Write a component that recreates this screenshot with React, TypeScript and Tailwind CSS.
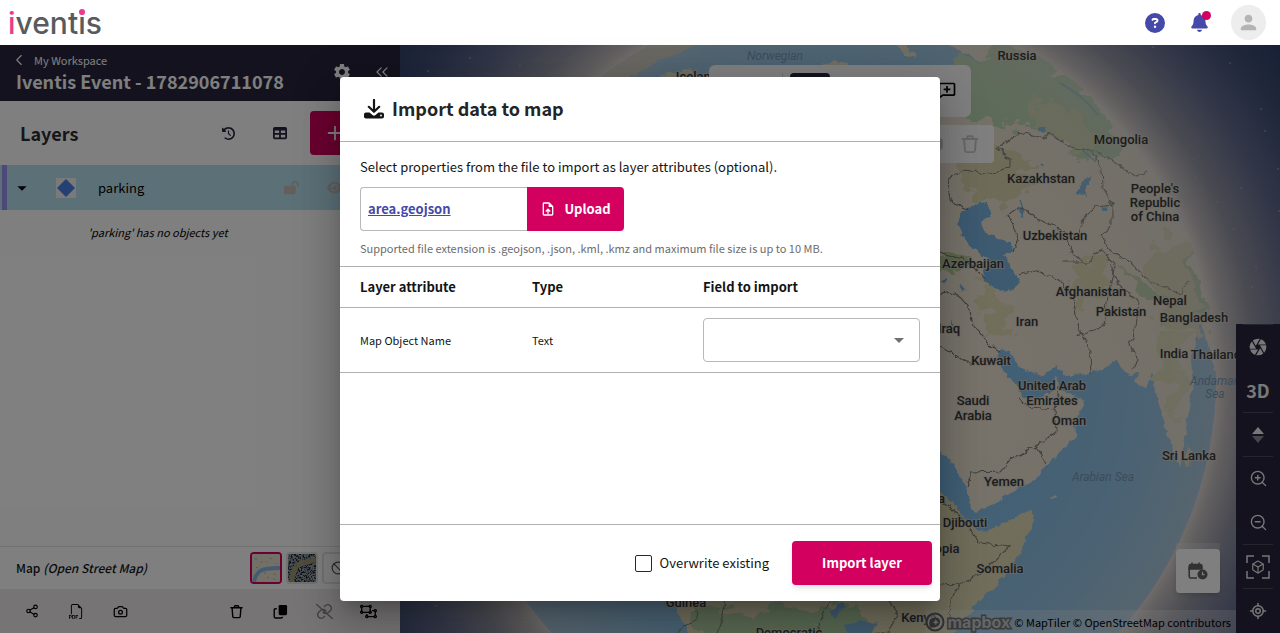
import type { ReactNode } from 'react'
import {
  Ban,
  Box,
  Camera,
  ChevronLeft,
  ChevronsLeft,
  LocateFixed,
  Plus,
  Share2,
  ZoomIn,
  ZoomOut,
} from 'lucide-react'
import { BiCommentAdd } from 'react-icons/bi'
import { BsFiletypePdf } from 'react-icons/bs'
import {
  FaBell,
  FaCircleQuestion,
  FaClockRotateLeft,
  FaEye,
  FaLockOpen,
  FaRegObjectUngroup,
  FaTable,
} from 'react-icons/fa6'
import { MdArrowDropDown, MdCamera, MdOutlineUploadFile, MdPerson, MdSettings } from 'react-icons/md'

const MAP_LABELS = [
  { x: 1017, y: 60, text: 'Russia' },
  { x: 697, y: 81, text: 'Iceland' },
  { x: 1121, y: 144, text: 'Mongolia' },
  { x: 1041, y: 183, text: 'Kazakhstan' },
  { x: 1155, y: 193, text: "People's" },
  { x: 1155, y: 207, text: 'Republic' },
  { x: 1155, y: 221, text: 'of China' },
  { x: 1055, y: 240, text: 'Uzbekistan' },
  { x: 973, y: 268, text: 'Azerbaijan' },
  { x: 1091, y: 296, text: 'Afghanistan' },
  { x: 1170, y: 305, text: 'Nepal' },
  { x: 1121, y: 316, text: 'Pakistan' },
  { x: 1194, y: 322, text: 'Bangladesh' },
  { x: 1027, y: 326, text: 'Iran' },
  { x: 949, y: 333, text: 'Iraq' },
  { x: 1174, y: 358, text: 'India' },
  { x: 1216, y: 359, text: 'Thailand' },
  { x: 991, y: 365, text: 'Kuwait' },
  { x: 1052, y: 390, text: 'United Arab' },
  { x: 1052, y: 405, text: 'Emirates' },
  { x: 973, y: 405, text: 'Saudi' },
  { x: 973, y: 420, text: 'Arabia' },
  { x: 1069, y: 425, text: 'Oman' },
  { x: 1189, y: 460, text: 'Sri Lanka' },
  { x: 1004, y: 486, text: 'Yemen' },
  { x: 926, y: 503, text: 'Eritrea' },
  { x: 965, y: 527, text: 'Djibouti' },
  { x: 936, y: 553, text: 'Ethiopia' },
  { x: 1000, y: 573, text: 'Somalia' },
  { x: 686, y: 607, text: 'Guinea' },
  { x: 919, y: 622, text: 'Kenya' },
  { x: 789, y: 637, text: 'Democratic' },
]

const SEA_LABELS = [
  { x: 775, y: 60, text: 'Norwegian' },
  { x: 1103, y: 481, text: 'Arabian Sea' },
  { x: 1215, y: 385, text: 'Andaman' },
  { x: 1215, y: 398, text: 'Sea' },
]

const STARS = [
  [1094, 57], [1153, 47], [1230, 63], [1261, 109], [1265, 131], [1119, 92], [1194, 159],
  [1196, 177], [1278, 169], [1241, 188], [1217, 202], [1279, 211], [1234, 229], [1256, 267],
  [1252, 287], [1228, 412], [436, 606], [470, 58], [520, 66], [428, 71],
]

function Globe() {
  return (
    <svg viewBox="400 45 880 588" preserveAspectRatio="xMidYMid slice" className="absolute inset-0 h-full w-full">
      <defs>
        <radialGradient id="sky" gradientUnits="userSpaceOnUse" cx="835" cy="378" r="560">
          <stop offset="0.67" stopColor="#ece4de" />
          <stop offset="0.7" stopColor="#c4bfc0" />
          <stop offset="0.75" stopColor="#9496a4" />
          <stop offset="0.83" stopColor="#666e90" />
          <stop offset="0.92" stopColor="#414f78" />
          <stop offset="1" stopColor="#2c4068" />
        </radialGradient>
        <radialGradient id="haze" gradientUnits="userSpaceOnUse" cx="835" cy="378" r="382">
          <stop offset="0.4" stopColor="#e0d8d0" stopOpacity="0" />
          <stop offset="0.8" stopColor="#e0d8d0" stopOpacity="0.22" />
          <stop offset="1" stopColor="#d8d4d0" stopOpacity="0.5" />
        </radialGradient>
        <clipPath id="disc">
          <circle cx="835" cy="378" r="381" />
        </clipPath>
        <filter id="coast" x="0" y="0" width="1" height="1">
          <feTurbulence type="fractalNoise" baseFrequency="0.12" numOctaves="3" seed="4" />
          <feDisplacementMap in="SourceGraphic" scale="7" xChannelSelector="R" yChannelSelector="G" />
        </filter>
        <filter id="patches" x="0" y="0" width="1" height="1">
          <feTurbulence type="fractalNoise" baseFrequency="0.035 0.05" numOctaves="4" seed="9" />
          <feDisplacementMap in="SourceGraphic" scale="46" xChannelSelector="R" yChannelSelector="G" />
        </filter>
      </defs>

      <rect x="400" y="45" width="880" height="588" fill="url(#sky)" />
      {STARS.map(([x, y]) => (
        <circle key={`${x}-${y}`} cx={x} cy={y} r="0.8" fill="#a8b0c4" />
      ))}

      <g clipPath="url(#disc)">
        <rect x="440" y="0" width="790" height="640" fill="#80bfec" />
        <g filter="url(#coast)">
          {/* Greenland and the arctic islands */}
          <path d="M600 100L620 82 660 62 700 50 732 40 650 20 560 80Z" fill="#c8c8b8" />
          <path d="M640 76Q670 54 720 42" stroke="#82c4f2" strokeWidth="5" fill="none" />
          <path d="M660 76L690 68 700 82 670 90Z M895 40L905 56 916 58 904 44Z M820 66L835 62 848 64 846 70 822 70Z" fill="#e4e0c0" />
          {/* Eurasia, India and Arabia */}
          <path
            d="M940 40L962 52 985 66 960 72 860 80 860 400 900 420 935 446 950 460 962 480 967 490 970 510 975 513 985 508 1000 500 1020 487 1038 478 1041 470 1050 463 1060 453 1068 445 1076 435 1075 422 1084 405 1082 398 1070 394 1060 390 1057 376 1050 393 1036 399 1022 398 1019 390 1005 372 998 358 1000 350 1010 352 1017 365 1027 371 1042 376 1050 370 1057 366 1063 375 1090 374 1105 368 1115 361 1122 371 1131 376 1139 372 1135 382 1146 389 1151 373 1156 388 1160 405 1165 428 1172 447 1179 466 1183 453 1186 430 1190 400 1193 385 1191 360 1200 322 1208 344 1214 370 1240 380 1240 30 960 30Z"
            fill="#eee6d4"
          />
          <path d="M1188 445L1192 455 1191 466 1187 469 1185 458Z" fill="#dfe0b8" />
          {/* Africa */}
          <path
            d="M660 570L674 601 695 645 945 645 962 622 975 606 990 591 1005 576 1017 556 1026 540 1033 523 1033 509 1010 520 990 530 978 531 968 523 956 507 940 492 900 470 700 500Z"
            fill="#e2dcb2"
          />
        </g>

        <g filter="url(#patches)">
          <path d="M985 45L1030 55 1090 95 1125 150 1095 165 1060 140 1020 120 985 128 950 110 950 70Z" fill="#b2d6ac" />
          <path d="M1035 95L1075 110 1100 150 1070 145 1040 130Z" fill="#cfd8ac" />
          <path d="M955 150L1010 145 1040 170 1010 205 960 195Z" fill="#dcd8ac" />
          <path d="M1150 240L1180 240 1205 300 1195 340 1150 310Z" fill="#dcdab0" />
          <path d="M1120 265L1150 290 1175 300 1165 308 1130 292Z" fill="#b8d4a4" />
          <path d="M1185 255L1205 290 1212 330 1195 300Z" fill="#a9cda0" />
          <path d="M1155 325L1185 330 1185 400 1175 425 1162 380Z" fill="#e0dfb4" />
          <path d="M1080 255L1110 260 1105 300 1075 295Z" fill="#e0dcb0" />
          <path d="M940 242L975 252 960 270 935 268Z" fill="#b8cc98" />
          <path d="M975 280L1000 300 1010 340 985 320Z" fill="#e2dcb4" />
          <path d="M700 610L860 605 880 645 690 645Z" fill="#a8d09c" />
        </g>

        {/* Inland water */}
        <g filter="url(#coast)" fill="#72b2e2">
          <path d="M974 205L987 203 992 215 981 222 985 233 1000 238 1011 244 1013 252 1003 252 1010 264 1019 284 1008 291 992 288 985 280 984 270 991 262 976 250 964 238 957 225 961 213Z" />
          <path d="M1077 192L1082 182 1092 177 1084 190 1088 196 1080 194Z" />
          <path d="M1018 209L1022 208 1023 218 1019 215Z M1040 127L1046 127 1045 132 1040 131Z M1041 162L1044 164 1042 167Z" />
          <path d="M1102 207L1108 206 1106 211 1101 211Z M940 281L948 279 945 284Z M960 284L966 290 963 292Z M951 318L955 325 952 324Z" />
          <path d="M830 612L842 602 846 606 834 618Z M846 625L860 620 876 623 872 633 846 637Z" />
        </g>
        <path
          d="M1060 83Q1085 97 1098 115M1082 150L1096 162M1020 200L1024 212"
          fill="none"
          stroke="#78b4dc"
          strokeWidth="1.5"
        />

        {/* Borders */}
        <g filter="url(#coast)" fill="none" stroke="#77736c" strokeWidth="1.1">
          <path d="M968 210L950 200 947 180 965 170 985 174 1010 168 1010 160 998 148 1020 132 1042 139 1048 132 1072 148 1090 150 1102 170 1103 188 1112 204 1098 206 1083 218 1080 236" />
          <path d="M1092 150L1110 158 1125 170 1138 177 1145 172" />
          <path d="M1013 253L1018 238 1008 215 1020 208 1045 222 1065 232 1070 250 1082 262" />
          <path d="M1018 275L1034 270 1060 280 1073 298 1078 325 1090 352 1091 374" />
          <path d="M1062 262L1090 262 1100 250 1115 264 1108 295 1104 326 1078 336" />
          <path d="M1112 204L1112 225 1100 236 1110 250 1130 262 1148 280 1180 294 1190 282" />
          <path d="M1110 265L1118 285 1137 300 1135 330 1130 345 1138 360 1132 370" />
          <path d="M940 294L955 292 970 310 973 325 990 345 1000 352M940 346L970 364 985 362 998 360" />
          <path d="M940 252L965 260 985 278M1018 398L1030 408 1055 410 1058 385M1055 410L1056 432 1036 446 1010 460 1000 471 972 472 967 486M1036 446L1046 464" />
          <path d="M940 500L960 515 972 532 980 543 1010 546 985 570 960 584 951 600 950 625M940 585L960 584" />
          <path d="M695 605L698 620 680 628 676 640M725 600L722 620 716 636M830 600L820 620 818 640M890 600L898 612 888 632M888 632L850 636" />
        </g>
        <path d="M1050 498L1056 495 1057 497 1051 499Z" fill="#e8e4d8" />
        <circle cx="835" cy="378" r="382" fill="url(#haze)" />
      </g>

      <g textAnchor="middle" fontFamily="Roboto, sans-serif" fontSize="13">
        {SEA_LABELS.map((label) => (
          <text key={label.text} x={label.x} y={label.y} fontStyle="italic" fontSize="12" fill="#7898b8">
            {label.text}
          </text>
        ))}
        {MAP_LABELS.map((label) => (
          <text
            key={label.text}
            x={label.x}
            y={label.y}
            fontWeight="500"
            fill="#3a3a3a"
            stroke="#d8d4c8"
            strokeWidth="2"
            strokeOpacity="0.7"
            paintOrder="stroke"
          >
            {label.text}
          </text>
        ))}
      </g>
    </svg>
  )
}

function TrashIcon({ className }: { className?: string }) {
  return (
    <svg viewBox="0 0 16 16" fill="none" stroke="currentColor" strokeWidth="1.5" strokeLinecap="round" strokeLinejoin="round" className={className}>
      <path d="M2 4h12M5.2 4l1-2.2h3.6l1 2.2M3.3 4l.7 9.2c.1.8.6 1.3 1.4 1.3h5.2c.8 0 1.3-.5 1.4-1.3L12.7 4" />
    </svg>
  )
}

function ToolbarButton({ label, children }: { label: string; children: ReactNode }) {
  return (
    <button type="button" aria-label={label} className="flex h-11 w-11 items-center justify-center text-black">
      {children}
    </button>
  )
}

function TopBar() {
  return (
    <header className="flex h-[45px] shrink-0 items-center justify-between bg-white pr-3.5 pl-2">
      <a href="#" className="font-[Inter,sans-serif] text-[30px] leading-8 font-medium text-[#575b60]">
        <span className="text-[#ec3a8c]">i</span>vent
        <span className="relative">
          i
          <span className="absolute top-1 left-px h-1.5 w-1.5 rounded-full bg-[#ec3a8c]" />
        </span>
        s
      </a>
      <div className="flex items-center">
        <button type="button" aria-label="Help" className="text-[#4549a8]">
          <FaCircleQuestion size={20} />
        </button>
        <button type="button" aria-label="Notifications" className="relative ml-[25px] text-[#4549a8]">
          <FaBell size={19} />
          <span className="absolute -top-0.5 -right-0.5 h-[9px] w-[9px] rounded-full bg-[#d4005f]" />
        </button>
        <button
          type="button"
          aria-label="Account"
          className="ml-[22px] flex h-[35px] w-[35px] items-center justify-center rounded-full bg-[#ededed] text-[#b4b4b4]"
        >
          <MdPerson size={23} />
        </button>
      </div>
    </header>
  )
}

function Sidebar() {
  return (
    <aside className="flex w-[400px] shrink-0 flex-col bg-white">
      <div className="flex h-14 items-center justify-between bg-[#26253d] pr-2 pb-0.5 pl-4 text-white">
        <div>
          <a href="#" className="flex items-center gap-1.5 text-[11px] leading-4">
            <ChevronLeft size={18} strokeWidth={1.5} className="-ml-1.5" />
            My Workspace
          </a>
          <h1 className="text-[18px] leading-6 font-bold">Iventis Event - 1782906711078</h1>
        </div>
        <div className="flex gap-5">
          <button type="button" aria-label="Settings">
            <MdSettings size={20} />
          </button>
          <button type="button" aria-label="Collapse panel">
            <ChevronsLeft size={20} strokeWidth={1.5} />
          </button>
        </div>
      </div>

      <div className="flex h-16 items-center px-5">
        <h2 className="flex-1 text-[18px] leading-6 font-bold text-[#2c2c30]">Layers</h2>
        <div className="flex items-center gap-2">
          <ToolbarButton label="History">
            <FaClockRotateLeft size={13} className="text-[#26253d]" />
          </ToolbarButton>
          <ToolbarButton label="Table view">
            <FaTable size={14} className="text-[#26253d]" />
          </ToolbarButton>
          <button
            type="button"
            aria-label="Add layer"
            className="flex h-11 w-[70px] items-center rounded bg-[#d4005f] pl-3.5 text-white"
          >
            <Plus size={22} />
          </button>
        </div>
      </div>

      <div className="flex h-[45px] items-center border-l-2 border-[#b9e0f0] bg-[#b9e0f0]">
        <span className="h-full w-[5px] bg-[#9a8ff5]" />
        <button type="button" aria-label="Collapse parking" className="ml-1 text-black">
          <MdArrowDropDown size={22} />
        </button>
        <span className="ml-[23px] flex h-5 w-5 items-center justify-center bg-[#f4f4f4]">
          <svg viewBox="0 0 18 18" className="h-[18px] w-[18px]">
            <path d="M9 0l9 9-9 9-9-9z" fill="#4a80e8" />
          </svg>
        </span>
        <span className="ml-[22px] flex-1 text-[13px] leading-5 text-black">parking</span>
        <FaLockOpen size={15} className="text-[#c8bcb8]" />
        <FaEye size={15} className="mr-[58px] ml-7 text-[#c8bcb8]" />
      </div>
      <p className="mt-3 flex-1 pl-[88px] text-[11px] leading-5 text-black italic">'parking' has no objects yet</p>

      <div className="flex h-[43px] items-center gap-1 border-t border-[#e4e4e4] pl-4">
        <span className="flex-1 text-[12px] leading-5 font-medium text-[#141414]">
          Map <em>(Open Street Map)</em>
        </span>
        <button type="button" aria-label="Street map" className="h-8 w-8 overflow-hidden rounded border-2 border-[#d4005f]">
          <svg viewBox="0 0 28 28" className="h-full w-full">
            <rect width="28" height="28" fill="#e6e0d0" />
            <path d="M3 5h2M9 9l1-2M18 4l2 1M4 14l2-1M15 24l2-1M22 19l1 2M12 19h2M24 9l1 1M14 8h1M21 25h2" stroke="#b4b0a0" strokeWidth="1" />
            <path d="M2 28C4 16 10 14 28 14" fill="none" stroke="#86b8e6" strokeWidth="4" />
          </svg>
        </button>
        <button type="button" aria-label="Satellite" className="h-8 w-8 overflow-hidden rounded border-2 border-[#e4e4e4]">
          <svg viewBox="0 0 28 28" className="h-full w-full">
            <filter id="grain" x="0" y="0" width="1" height="1">
              <feTurbulence type="fractalNoise" baseFrequency="0.6" numOctaves="2" />
              <feColorMatrix values="4 0 0 0 -1.6  4 0 0 0 -1.6  4 0 0 0 -1.6  0 0 0 0 1" />
            </filter>
            <rect width="28" height="28" filter="url(#grain)" />
            <rect width="28" height="28" fill="#3c5464" fillOpacity="0.5" />
            <path d="M4 28C4 12 10 8 28 6" fill="none" stroke="#a89c78" strokeWidth="5" strokeOpacity="0.9" />
          </svg>
        </button>
        <button
          type="button"
          aria-label="No background"
          className="mr-[46px] flex h-8 w-8 items-center justify-center rounded border-2 border-[#e4e4e4] text-[#55555f]"
        >
          <Ban size={14} />
        </button>
      </div>

      <div className="flex h-11 items-center justify-between bg-[#efe9ea] px-2.5">
        <div className="flex">
          <ToolbarButton label="Share">
            <Share2 size={14} />
          </ToolbarButton>
          <ToolbarButton label="Export PDF">
            <BsFiletypePdf size={15} />
          </ToolbarButton>
          <ToolbarButton label="Snapshot">
            <Camera size={15} />
          </ToolbarButton>
        </div>
        <div className="flex">
          <ToolbarButton label="Delete">
            <TrashIcon className="h-[15px] w-[15px]" />
          </ToolbarButton>
          <ToolbarButton label="Duplicate">
            <svg viewBox="0 0 16 16" className="h-[15px] w-[15px]">
              <rect x="6" y="1" width="9" height="11" rx="1.5" fill="currentColor" />
              <path d="M4 5H2.5C1.7 5 1.3 5.5 1.3 6.2v7.5c0 .8.5 1.2 1.2 1.2H9c.8 0 1.2-.5 1.2-1.2" fill="none" stroke="currentColor" strokeWidth="1.5" />
            </svg>
          </ToolbarButton>
          <ToolbarButton label="Unlink">
            <svg viewBox="0 0 24 24" fill="none" stroke="currentColor" strokeWidth="2" strokeLinecap="round" className="h-[17px] w-[17px] text-[#8a8688]">
              <path d="M10 13a5 5 0 0 0 7.5.5l3-3a5 5 0 0 0-7-7L12 5M14 11a5 5 0 0 0-7.5-.5l-3 3a5 5 0 0 0 7 7L12 19M1 2l22 20" />
            </svg>
          </ToolbarButton>
          <ToolbarButton label="Group">
            <FaRegObjectUngroup size={17} />
          </ToolbarButton>
        </div>
      </div>
    </aside>
  )
}

function MapControls() {
  return (
    <div className="flex w-11 flex-col self-end bg-[#26253d] text-[#f0f0f0]">
      <button type="button" aria-label="Aperture" className="mx-[7px] flex h-11 items-center justify-center border-t border-[#4a4a5e]">
        <MdCamera size={20} />
      </button>
      <button type="button" className="h-11 text-[18px] leading-6 font-bold">3D</button>
      <button type="button" aria-label="Tilt" className="mx-[7px] flex h-11 items-center justify-center border-t border-[#4a4a5e]">
        <svg viewBox="0 0 12 16" className="h-4 w-3">
          <path d="M6 0l6 7H0z" fill="#f0f0f0" />
          <path d="M6 16l6-7H0z" fill="#8a8a98" />
        </svg>
      </button>
      <button type="button" aria-label="Zoom in" className="mx-[7px] flex h-11 items-center justify-center border-t border-[#4a4a5e]">
        <ZoomIn size={19} strokeWidth={1.75} />
      </button>
      <button type="button" aria-label="Zoom out" className="flex h-11 items-center justify-center">
        <ZoomOut size={19} strokeWidth={1.75} />
      </button>
      <button type="button" aria-label="3D view" className="relative mx-[7px] flex h-11 items-center justify-center border-t border-[#4a4a5e]">
        <svg viewBox="0 0 24 24" fill="none" stroke="currentColor" strokeWidth="1.5" className="absolute h-6 w-6">
          <path d="M1 8V1h7M16 1h7v7M23 16v7h-7M8 23H1v-7" />
        </svg>
        <Box size={14} strokeWidth={2} />
      </button>
      <button type="button" aria-label="Locate" className="mx-[7px] flex h-[45px] items-center justify-center border-t border-[#4a4a5e]">
        <LocateFixed size={18} strokeWidth={2} />
      </button>
    </div>
  )
}

function MapView() {
  return (
    <section className="relative flex min-w-0 flex-1 overflow-hidden">
      <Globe />
      <div className="absolute inset-0 flex flex-col items-center gap-2 pt-5">
        <div className="flex h-[52px] w-[262px] items-start justify-between rounded-md bg-white px-3.5 pt-2">
          <span className="ml-[59px] h-9 w-px bg-[#d8d8d8]" />
          <button type="button" aria-label="Select" className="mr-[105px] ml-1 h-9 w-10 rounded bg-[#26253d]" />
          <button type="button" aria-label="Add comment" className="pt-2 text-black">
            <BiCommentAdd size={20} />
          </button>
        </div>
        <div className="flex h-[38px] w-[308px] items-center justify-end rounded bg-white pr-3.5 text-[#cccccc]">
          <span className="mr-[17px] h-3 w-3 rounded bg-[#cccccc]" />
          <button type="button" aria-label="Delete object">
            <TrashIcon className="h-5 w-5" />
          </button>
        </div>
      </div>

      <div className="relative flex flex-1 justify-end">
        <div className="flex flex-col items-end justify-end">
          <div className="mr-4 mb-[17px] bg-white/20 pt-1.5">
            <button
              type="button"
              aria-label="Timeline"
              className="flex h-11 w-11 items-center justify-center rounded bg-white text-[#626262] shadow-md"
            >
              <svg viewBox="0 0 20 18" className="h-[18px] w-5">
                <path d="M3 2.5h9.5c1 0 1.5.5 1.5 1.5v3H1.2V4c0-1 .6-1.5 1.8-1.5zM4 .5v3M11 .5v3" fill="currentColor" stroke="currentColor" strokeWidth="1.5" />
                <path d="M1.2 5v9.5c0 1 .6 1.5 1.5 1.5H9" fill="none" stroke="currentColor" strokeWidth="1.6" />
                <circle cx="14.5" cy="12.5" r="5" fill="currentColor" />
                <path d="M14.5 9.8v2.9h2" fill="none" stroke="#fff" strokeWidth="1.2" />
              </svg>
            </button>
          </div>
          <div className="flex h-[23px] items-center bg-white/25 pr-[5px] text-[11px] leading-5 text-black">
            <svg viewBox="0 0 20 20" className="mr-0.5 h-5 w-5">
              <circle cx="10" cy="10" r="8.5" fill="#e4e4e4" fillOpacity="0.5" stroke="#666" strokeWidth="2" />
              <path d="M5 15.5c-2-6 0-10 5.5-10 4 0 5.500 3.500 4 6.500-1.700 3.300-6 3.700-9.500 3.500z" fill="#666" />
              <path d="M10.8 7l1 2.2 2.2 1-2.2 1-1 2.2-1-2.2-2.2-1 2.2-1z" fill="#d8d8d8" />
            </svg>
            <a
              href="#"
              className="mr-1 font-[Inter,sans-serif] text-[16px] font-bold text-[#c8ccd0] [-webkit-text-stroke:3px_#777] [paint-order:stroke]"
            >
              mapbox
            </a>
            <span>
              <a href="#">© MapTiler</a> <a href="#">© OpenStreetMap contributors</a>
            </span>
          </div>
        </div>
        <MapControls />
      </div>
    </section>
  )
}

function ImportDialog() {
  return (
    <div
      role="dialog"
      aria-labelledby="import-title"
      className="flex min-h-[524px] w-[600px] flex-col rounded bg-white text-[#141414] shadow-[0_11px_15px_-7px_rgba(0,0,0,0.2),0_24px_38px_3px_rgba(0,0,0,0.14),0_9px_46px_8px_rgba(0,0,0,0.12)]"
    >
      <div className="flex h-[65px] items-center gap-2 border-b border-[#b0b0b0] px-6">
        <svg viewBox="0 0 20 20" className="h-5 w-5">
          <path d="M10 1v11M4.8 7.800L10 12.800l5.200-5" fill="none" stroke="currentColor" strokeWidth="2.2" strokeLinecap="round" strokeLinejoin="round" />
          <path d="M2 13.5h3.500l3 2.600c.9.800 2.100.8 3 0l3-2.600H18c1.200 0 2 .9 2 2v2c0 1.200-.8 2-2 2H2c-1.200 0-2-.8-2-2v-2c0-1.100.8-2 2-2z" fill="currentColor" />
          <circle cx="17" cy="16.5" r="0.9" fill="#fff" />
        </svg>
        <h2 id="import-title" className="pb-0.5 text-[18px] leading-6 font-bold text-[#242424]">Import data to map</h2>
      </div>

      <div className="border-b border-[#b0b0b0] px-5 pt-[15px] pb-2">
        <p className="text-[13px] leading-5">Select properties from the file to import as layer attributes (optional).</p>
        <div className="mt-2.5 flex h-11">
          <div className="flex w-[167px] items-center rounded-l border border-r-0 border-[#b8b8b8] px-[7px]">
            <a href="#" className="text-[13px] leading-5 font-bold text-[#4549a8] underline">area.geojson</a>
          </div>
          <button
            type="button"
            className="flex w-[97px] items-center justify-center gap-2 rounded-r bg-[#d4005f] text-[13px] leading-5 font-bold text-white"
          >
            <MdOutlineUploadFile size={16} />
            Upload
          </button>
        </div>
        <p className="mt-[7px] text-[11px] leading-5 text-[#6c6c6c]">
          Supported file extension is .geojson, .json, .kml, .kmz and maximum file size is up to 10 MB.
        </p>
      </div>

      <table className="w-full table-fixed text-left">
        <thead>
          <tr className="h-10 border-b border-[#b0b0b0] text-[13px] leading-5">
            <th className="w-48 pl-5 font-bold">Layer attribute</th>
            <th className="w-[171px] font-bold">Type</th>
            <th className="font-bold">Field to import</th>
          </tr>
        </thead>
        <tbody>
          <tr className="h-[65px] border-b border-[#b0b0b0] text-[11px] leading-5">
            <td className="pl-5">Map Object Name</td>
            <td>Text</td>
            <td className="pr-5">
              <div className="relative">
                <select
                  aria-label="Field to import for Map Object Name"
                  className="block h-11 w-full appearance-none rounded border border-[#b8b8b8] bg-white px-3"
                >
                  <option value="" />
                </select>
                <svg viewBox="0 0 10 5" className="pointer-events-none absolute top-5 right-4 h-[5px] w-2.5">
                  <path d="M0 0h10L5 5z" fill="#707070" />
                </svg>
              </div>
            </td>
          </tr>
        </tbody>
      </table>

      <div className="mt-auto flex h-[77px] items-center justify-end border-t border-[#b0b0b0] px-2">
        <label className="mr-[23px] flex items-center gap-2 text-[13px] leading-5">
          <input type="checkbox" className="h-[17px] w-[17px] appearance-none rounded-[2px] border border-[#26253d] checked:bg-[#26253d]" />
          Overwrite existing
        </label>
        <button
          type="button"
          className="h-11 w-[140px] rounded bg-[#d4005f] text-[13px] leading-5 font-bold text-white shadow-md"
        >
          Import layer
        </button>
      </div>
    </div>
  )
}

export default function App() {
  return (
    <div className="flex min-h-screen flex-col font-['Noto_Sans_CJK_SC',sans-serif]">
      <TopBar />
      <main className="relative flex flex-1">
        <Sidebar />
        <MapView />
        <div className="absolute inset-0 flex items-center justify-center bg-black/50">
          <ImportDialog />
        </div>
      </main>
    </div>
  )
}
